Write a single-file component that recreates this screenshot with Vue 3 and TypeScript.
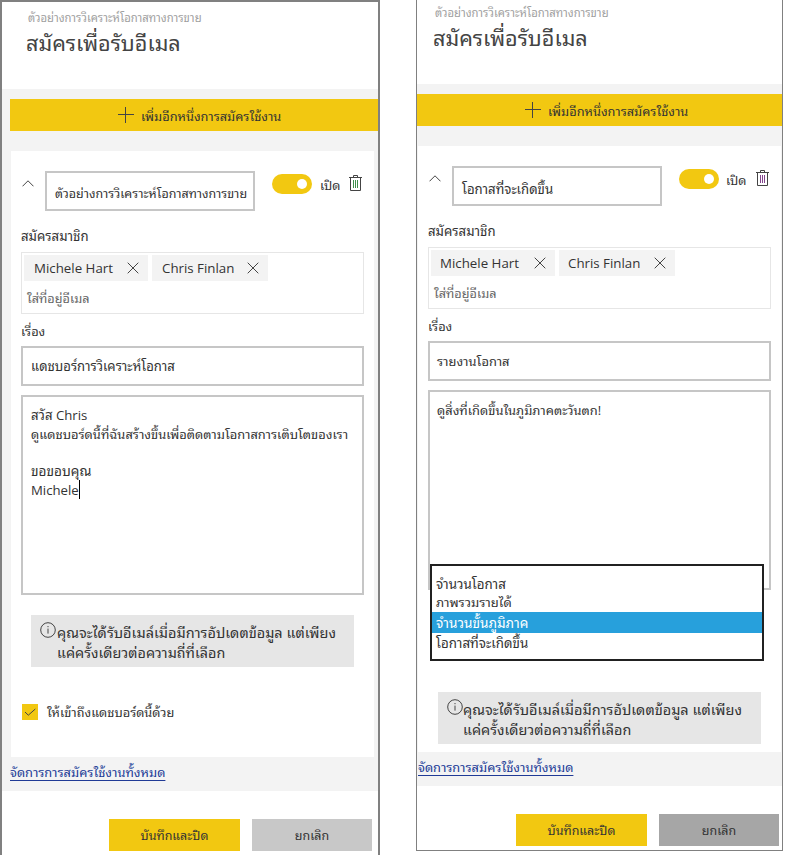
<script setup lang="ts">
interface Panel {
  id: string
  name: string
  subject: string
  message: string[]
  caret: boolean
  options: string[]
  selected: number
  access: boolean
}

const people = ['Michele Hart', 'Chris Finlan']

const panels: Panel[] = [
  {
    id: 'dashboard',
    name: 'ตัวอย่างการวิเคราะห์โอกาสทางการขาย',
    subject: 'แดชบอร์การวิเคราะห์โอกาส',
    message: ['สวัส Chris', 'ดูแดชบอร์ดนี้ที่ฉันสร้างขึ้นเพื่อติดตามโอกาสการเติบโตของเรา', '', 'ขอขอบคุณ', 'Michele'],
    caret: true,
    options: [],
    selected: -1,
    access: true,
  },
  {
    id: 'report',
    name: 'โอกาสที่จะเกิดขึ้น',
    subject: 'รายงานโอกาส',
    message: ['ดูสิ่งที่เกิดขึ้นในภูมิภาคตะวันตก!'],
    caret: false,
    options: ['จำนวนโอกาส', 'ภาพรวมรายได้', 'จำนวนขั้นภูมิภาค', 'โอกาสที่จะเกิดขึ้น'],
    selected: 2,
    access: false,
  },
]
</script>

<template>
  <main class="page">
    <section v-for="p in panels" :key="p.id" class="panel" :class="p.id">
      <header class="head">
        <div class="crumb"><span>ตัวอย่างการวิเคราะห์โอกาสทางการขาย</span></div>
        <h1 class="title"><span>สมัครเพื่อรับอีเมล</span></h1>
      </header>

      <div class="body">
        <button class="add">
          <svg width="16" height="16" viewBox="0 0 16 16"><path d="M7.500 0v16M0 7.500h16" /></svg>
          <span>เพิ่มอีกหนึ่งการสมัครใช้งาน</span>
        </button>

        <div class="card">
          <div class="top">
            <svg class="chev" width="12" height="7" viewBox="0 0 12 7"><path d="M.5 6.300 6 .8l5.500 5.500" /></svg>
            <div class="field name"><span>{{ p.name }}</span></div>
            <div class="toggle"><i></i></div>
            <span class="on">เปิด</span>
            <svg class="trash" width="13" height="16" viewBox="0 0 13 16">
              <path d="M0 2.500h13M4.500 2V.5h4V2M1.500 3v12.500h10V3" />
              <path class="bars" d="M4.500 5v8M6.500 5v8M8.500 5v8" />
            </svg>
          </div>

          <div class="label sub"><span>สมัครสมาชิก</span></div>
          <div class="recipients">
            <div class="chips">
              <div v-for="n in people" :key="n" class="chip">
                <span>{{ n }}</span>
                <svg width="12" height="12" viewBox="0 0 12 12"><path d="M.7.7l10.600 10.600M11.300.7.7 11.300" /></svg>
              </div>
            </div>
            <div class="hint"><span>ใส่ที่อยู่อีเมล</span></div>
          </div>

          <div class="label subj"><span>เรื่อง</span></div>
          <div class="field subject"><span>{{ p.subject }}</span></div>

          <div class="message">
            <div v-for="(line, i) in p.message" :key="i" class="line" :class="'l' + i">
              <span>{{ line }}</span><i v-if="p.caret && i === p.message.length - 1" class="caret"></i>
            </div>
            <ul v-if="p.options.length" class="menu">
              <li v-for="(o, i) in p.options" :key="o" :class="['o' + i, { sel: i === p.selected }]"><span>{{ o }}</span></li>
            </ul>
          </div>

          <div class="info">
            <svg width="16" height="16" viewBox="0 0 16 16">
              <circle cx="8" cy="8" r="7.300" />
              <path d="M8 6.600v5M8 4v1.200" />
            </svg>
            <div class="note">
              <div class="n1"><span>คุณจะได้รับอีเมล์เมื่อมีการอัปเดตข้อมูล แต่เพียง</span></div>
              <div class="n2"><span>แค่ครั้งเดียวต่อความถี่ที่เลือก</span></div>
            </div>
          </div>

          <label v-if="p.access" class="access">
            <svg width="16" height="16" viewBox="0 0 16 16"><path d="M3 8l3.300 3.200L13.300 5" /></svg>
            <span>ให้เข้าถึงแดชบอร์ดนี้ด้วย</span>
          </label>
        </div>

        <a class="manage"><span>จัดการการสมัครใช้งานทั้งหมด</span></a>
      </div>

      <footer class="foot">
        <button class="save"><span>บันทึกและปิด</span></button>
        <button class="cancel"><span>ยกเลิก</span></button>
      </footer>
    </section>
  </main>
</template>

<style>
body {
  background: #fff;
  overflow: hidden;
}
</style>

<style scoped>
* {
  box-sizing: border-box;
}
.page {
  display: flex;
  align-items: flex-start;
  gap: 36px;
  width: 797px;
  height: 855px;
  overflow: hidden;
  font-family: "Open Sans", "Leelawadee UI", "Noto Sans Thai Looped", "Loma", "Umpush", "Waree", "Noto Sans", sans-serif;
  font-size: 12.8px;
  line-height: 20px;
  color: #333;
  white-space: nowrap;
}
button {
  border: 0;
  padding: 0;
  font: inherit;
  color: inherit;
}
svg {
  display: block;
  flex: none;
  fill: none;
  stroke: #444;
}
.panel {
  flex: none;
  width: 380px;
  height: 860px;
  border: 2px solid #808080;
}
.report {
  width: 367px;
  height: 856px;
  margin-top: -5px;
  border-width: 1px;
}
.head {
  height: 87px;
  padding: 6px 0 0 26px;
}
.report .head {
  height: 88px;
  padding: 7px 0 0 18px;
}
.crumb {
  height: 20px;
  font-size: 11.3px;
  color: #a0a0a0;
}
.title {
  margin: -1px 0 0 -2px;
  height: 32px;
  line-height: 32px;
  font-size: 21.6px;
  font-weight: 400;
  color: #444;
}
.body {
  height: 702px;
  padding: 10px 0 0 8px;
  background: #f3f3f3;
}
.report .body {
  padding-left: 0;
}
.add {
  display: flex;
  align-items: center;
  width: 100%;
  height: 32px;
  padding-left: 108px;
  gap: 7px;
  background: #f2c811;
}
.add span {
  padding-top: 1px;
}
.card {
  width: 363px;
  height: 606px;
  margin: 20px 0 0 1px;
  padding: 20px 10px 0;
  background: #fff;
}
.top {
  display: flex;
  align-items: flex-start;
  height: 40px;
}
.chev {
  margin: 9px 11px 0 1px;
}
.field {
  display: flex;
  align-items: center;
  height: 40px;
  border: 2px solid #c6c6c6;
  padding: 0 0 0 8px;
  background: #fff;
}
.report .field {
  padding-left: 7px;
}
.name {
  width: 210px;
  padding-top: 6px;
  font-size: 12.5px;
}
.report .name {
  padding-left: 8px;
  font-size: 13.2px;
}
.toggle {
  width: 40px;
  height: 20px;
  margin: 3px 8px 0 17px;
  padding: 5px;
  border-radius: 10px;
  background: #f2c811;
}
.toggle i {
  display: block;
  width: 10px;
  height: 10px;
  margin-left: 20px;
  border-radius: 50%;
  background: #fff;
}
.on {
  width: 29px;
  margin-top: 4px;
}
.report .on {
  text-indent: -1px;
}
.trash {
  margin-top: 4px;
}
.bars {
  stroke: #3f8f4c;
}
.report .bars {
  stroke: #84458e;
}
.label {
  height: 20px;
}
.sub {
  margin-top: 15px;
  font-size: 13.2px;
}
.recipients {
  height: 62px;
  margin-top: 6px;
  padding: 2px;
  border: 1px solid #e6e6e6;
}
.chips {
  display: flex;
  gap: 4px;
}
.chip {
  display: flex;
  align-items: center;
  justify-content: space-between;
  height: 26px;
  width: 124px;
  padding: 0 9px 0 10px;
  background: #f3f3f3;
  font-size: 13.3px;
}
.report .chip {
  padding-left: 9px;
}
.chip + .chip {
  width: 116px;
}
.hint {
  padding: 7px 0 0 3px;
  font-size: 12.7px;
  color: #666;
}
.subj {
  margin-top: 7px;
}
.subject {
  margin-top: 5px;
  font-size: 13.1px;
}
.report .subject {
  font-size: 12.9px;
}
.message {
  position: relative;
  height: 200px;
  margin-top: 9px;
  padding: 9px 0 0 8px;
  border: 2px solid #c6c6c6;
  font-size: 13.2px;
}
.report .message {
  padding-left: 7px;
  font-size: 12.9px;
}
.line {
  display: flex;
  align-items: center;
  height: 18.600px;
}
.l1 {
  font-size: 12.9px;
}
.l3 {
  font-size: 13.6px;
}
.caret {
  width: 1px;
  height: 19px;
  background: #000;
}
.menu {
  position: absolute;
  left: 0;
  top: 172px;
  width: 334px;
  height: 97px;
  margin: 0;
  padding: 8px 0 0;
  border: 2px solid #212121;
  background: #fff;
  list-style: none;
  font-size: 13.35px;
}
.menu li {
  height: 19px;
  padding: 0 0 0 4px;
}
.menu .o1 {
  line-height: 19px;
  font-size: 13px;
}
.menu .o2 {
  height: 21px;
  padding-top: 1px;
  font-size: 13.6px;
}
.menu .sel {
  background: #27a0dc;
  color: #fff;
}
.info {
  display: flex;
  width: 323px;
  height: 52px;
  margin: 20px 0 0 10px;
  padding: 7px 0 0 9px;
  gap: 1px;
  background: #e6e6e6;
}
.report .info {
  margin-top: 102px;
  gap: 0;
}
.note {
  padding-top: 1px;
  font-size: 14.5px;
}
.n2 {
  font-size: 14.4px;
}
.access {
  display: flex;
  align-items: center;
  gap: 9px;
  height: 20px;
  margin: 35px 0 0 1px;
}
.access svg {
  background: #f2c811;
}
.manage {
  display: inline-block;
  margin-top: 5px;
  font-size: 12.87px;
  color: #203a96;
  text-decoration: underline;
  text-underline-offset: 3px;
}
.report .manage {
  margin-left: 1px;
}
.foot {
  display: flex;
  justify-content: flex-end;
  gap: 12px;
  padding: 28px 6px 0 0;
}
.report .foot {
  padding-right: 3px;
}
.foot button {
  height: 32px;
  width: 120px;
  padding-top: 2px;
  font-size: 12.5px;
  background: #c8c8c8;
}
.foot .save {
  width: 131px;
  background: #f2c811;
}
.report .foot .cancel {
  background: #a6a6a6;
}
</style>
